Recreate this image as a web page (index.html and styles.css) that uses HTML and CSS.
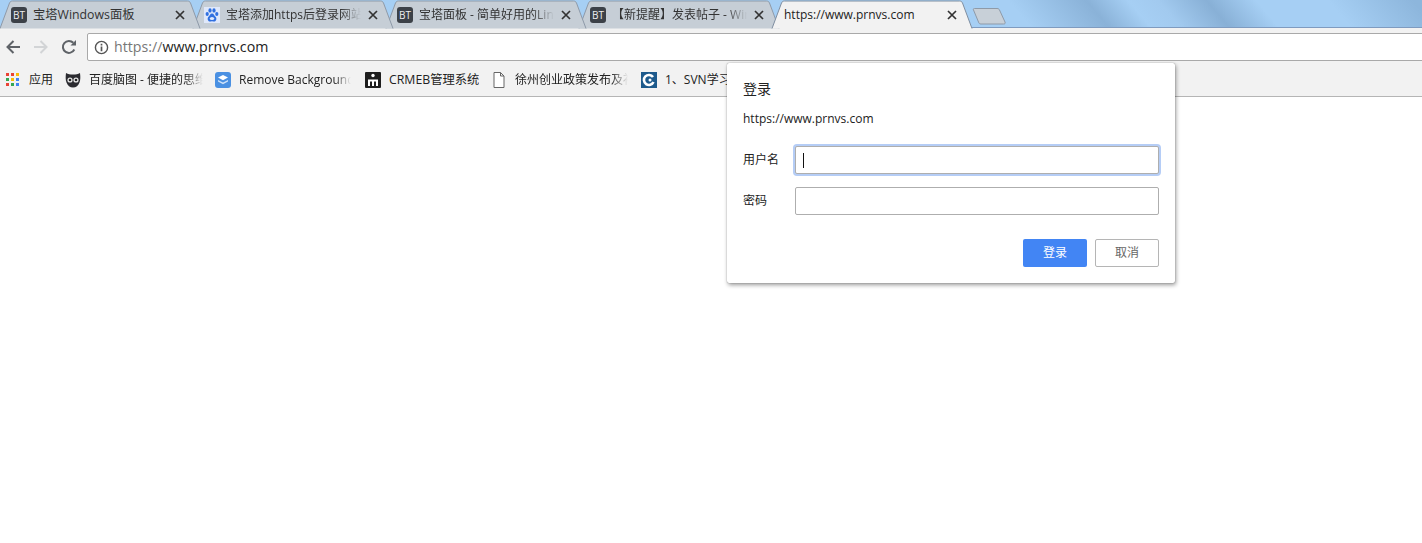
FILE: index.html
```html
<!DOCTYPE html>
<html lang="zh-CN">
<head>
<meta charset="utf-8">
<title>https://www.prnvs.com</title>
<link rel="stylesheet" href="styles.css">
</head>
<body>
<header class="chrome">
  <div class="tabstrip">
    <div class="tab">
      <svg class="tab-shape" viewBox="0 0 205 29"><path d="M1 28.500 L10.500 3 C11 1.800 12 1 13.500 1 H188.500 C190 1 191 1.800 191.500 3 L201 28.500" fill="#c6ced6" stroke="#8e9aa8"/></svg>
      <span class="bt">BT</span><span class="tab-title t1">宝塔Windows面板</span>
      <svg class="x" viewBox="0 0 10 10"><path d="M1 1l8 8M9 1 1 9" fill="none" stroke="#333" stroke-width="1.700"/></svg>
    </div>
    <div class="tab">
      <svg class="tab-shape" viewBox="0 0 205 29"><path d="M1 28.500 L10.500 3 C11 1.800 12 1 13.500 1 H188.500 C190 1 191 1.800 191.500 3 L201 28.500" fill="#c6ced6" stroke="#8e9aa8"/></svg>
      <svg class="fav" viewBox="0 0 16 16"><rect width="16" height="16" fill="#dfe8fb"/><g fill="#2f6fe0"><ellipse cx="3.200" cy="7" rx="1.600" ry="2"/><ellipse cx="6" cy="3.400" rx="1.600" ry="2.200"/><ellipse cx="10" cy="3.400" rx="1.600" ry="2.200"/><ellipse cx="12.800" cy="7" rx="1.600" ry="2"/><path d="M8 6.500c-2 0-2 2-3.500 3.200C3 11 3.500 14.500 6 14.500c1 0 1.300-.3 2-.3s1 .3 2 .3c2.500 0 3-3.500 1.500-4.800C10 8.500 10 6.500 8 6.500z"/></g><ellipse cx="8" cy="11.500" rx="2.200" ry="1.600" fill="#dfe8fb"/></svg>
      <span class="tab-title">宝塔添加https后登录网站</span>
      <svg class="x" viewBox="0 0 10 10"><path d="M1 1l8 8M9 1 1 9" fill="none" stroke="#333" stroke-width="1.700"/></svg>
    </div>
    <div class="tab">
      <svg class="tab-shape" viewBox="0 0 205 29"><path d="M1 28.500 L10.500 3 C11 1.800 12 1 13.500 1 H188.500 C190 1 191 1.800 191.500 3 L201 28.500" fill="#c6ced6" stroke="#8e9aa8"/></svg>
      <span class="bt">BT</span><span class="tab-title">宝塔面板 - 简单好用的Linux</span>
      <svg class="x" viewBox="0 0 10 10"><path d="M1 1l8 8M9 1 1 9" fill="none" stroke="#333" stroke-width="1.700"/></svg>
    </div>
    <div class="tab">
      <svg class="tab-shape" viewBox="0 0 205 29"><path d="M1 28.500 L10.500 3 C11 1.800 12 1 13.500 1 H188.500 C190 1 191 1.800 191.500 3 L201 28.500" fill="#c6ced6" stroke="#8e9aa8"/></svg>
      <span class="bt">BT</span><span class="tab-title">【新提醒】发表帖子 - Windows</span>
      <svg class="x" viewBox="0 0 10 10"><path d="M1 1l8 8M9 1 1 9" fill="none" stroke="#333" stroke-width="1.700"/></svg>
    </div>
    <div class="tab tab-active">
      <svg class="tab-shape" viewBox="0 0 205 29"><path d="M1 28.500 L10.500 3 C11 1.800 12 1 13.500 1 H188.500 C190 1 191 1.800 191.500 3 L201 28.500" fill="#f2f2f2" stroke="#7f8ea0"/></svg>
      <span class="tab-title active-title">https://www.prnvs.com</span>
      <svg class="x" viewBox="0 0 10 10"><path d="M1 1l8 8M9 1 1 9" fill="none" stroke="#333" stroke-width="1.700"/></svg>
    </div>
    <svg class="newtab" viewBox="0 0 36 18"><path d="M2.500 1.500 H25 C26.500 1.500 27 2 27.500 3 L33 15 C33.500 16.500 33 17 31.500 17 H9 C7.500 17 7 16.500 6.500 15 L1.500 3 C1 2 1.500 1.500 2.500 1.500z" fill="#c8d0d8" stroke="#8e9aa8"/></svg>
  </div>

  <div class="toolbar">
    <svg class="nav" viewBox="0 0 16 16"><path d="M15 8H2.500M8.500 2 2.500 8l6 6" fill="none" stroke="#5f6368" stroke-width="2"/></svg>
    <svg class="nav" viewBox="0 0 16 16"><path d="M1 8h12.500M7.500 2l6 6-6 6" fill="none" stroke="#d2d4d6" stroke-width="2"/></svg>
    <svg class="nav" viewBox="0 0 16 16"><path d="M13.300 10.500A6 6 0 1 1 12.300 3.800" fill="none" stroke="#5f6368" stroke-width="2"/><path d="M9.500 6.500H15V1z" fill="#5f6368"/></svg>
    <div class="omnibox">
      <svg class="info" viewBox="0 0 16 16"><circle cx="8" cy="8" r="6.500" fill="none" stroke="#555" stroke-width="1.500"/><path d="M7.100 7h1.800v5H7.100zM7.100 4h1.800v1.800H7.100z" fill="#555"/></svg>
      <span class="url"><span class="scheme">https://</span>www.prnvs.com</span>
    </div>
  </div>

  <nav class="bookmarks">
    <div class="bm bm-apps">
      <svg class="bm-icon apps" viewBox="0 0 14 14"><g><rect x="0" y="0" width="3" height="3" fill="#ea4335"/><rect x="5" y="0" width="3" height="3" fill="#ea4335"/><rect x="10" y="0" width="3" height="3" fill="#fbbc05"/><rect x="0" y="5" width="3" height="3" fill="#34a853"/><rect x="5" y="5" width="3" height="3" fill="#fbbc05"/><rect x="10" y="5" width="3" height="3" fill="#4285f4"/><rect x="0" y="10" width="3" height="3" fill="#ea4335"/><rect x="5" y="10" width="3" height="3" fill="#34a853"/><rect x="10" y="10" width="3" height="3" fill="#4285f4"/></g></svg>
      <span class="bm-text">应用</span>
    </div>
    <div class="bm bm-owl">
      <svg class="bm-icon" viewBox="0 0 16 16"><path d="M1 1c2 1 4 1.500 7 1.500S13 2 15 1c.5 4 .5 7-.5 9.500C13.500 13.500 11 15.500 8 15.500S2.500 13.500 1.500 10.500C.5 8 .5 5 1 1z" fill="#2b2b30"/><circle cx="5" cy="8" r="2.600" fill="#e8e8e8"/><circle cx="11" cy="8" r="2.600" fill="#e8e8e8"/><circle cx="5" cy="8" r="1.300" fill="#222"/><circle cx="11" cy="8" r="1.300" fill="#222"/></svg>
      <span class="bm-text fade">百度脑图 - 便捷的思维工具</span>
    </div>
    <div class="bm bm-rb">
      <svg class="bm-icon" viewBox="0 0 16 16"><rect width="16" height="16" rx="3" fill="#4a90e2"/><path d="M8 3l5 2.600L8 8.200 3 5.600z" fill="#fff"/><path d="M3 8l5 2.600L13 8v1.600l-5 2.600-5-2.600z" fill="#cfe2f8"/></svg>
      <span class="bm-text fade">Remove Background</span>
    </div>
    <div class="bm bm-crmeb">
      <svg class="bm-icon" viewBox="0 0 16 16"><rect width="16" height="16" rx="1" fill="#1e1e1e"/><circle cx="8" cy="3.500" r="1.700" fill="#fff"/><path d="M3 14V7.500h10V14h-2V9.500H9V14H7V9.500H5V14z" fill="#fff"/></svg>
      <span class="bm-text crmeb-text">CRMEB管理系统</span>
    </div>
    <div class="bm bm-doc">
      <svg class="bm-icon doc" viewBox="0 0 12 16"><path d="M1 .5h6.500L11 4v11.500H1zM7.500.5V4H11" fill="#fff" stroke="#666"/></svg>
      <span class="bm-text fade">徐州创业政策发布及补贴</span>
    </div>
    <div class="bm bm-svn">
      <svg class="bm-icon" viewBox="0 0 16 16"><rect width="16" height="16" fill="#1d5a8c"/><path d="M12 5A5 5 0 1 0 12.500 10" fill="none" stroke="#fff" stroke-width="2.600"/><circle cx="9" cy="8" r="1.500" fill="#fff"/></svg>
      <span class="bm-text">1、SVN学习</span>
    </div>
  </nav>
</header>

<section class="dialog">
  <h1 class="dialog-title">登录</h1>
  <p class="dialog-origin">https://www.prnvs.com</p>
  <div class="field">
    <label class="field-label">用户名</label>
    <div class="input input-focus"><span class="caret"></span></div>
  </div>
  <div class="field">
    <label class="field-label">密码</label>
    <div class="input"></div>
  </div>
  <div class="actions">
    <span class="btn btn-primary">登录</span>
    <span class="btn btn-cancel">取消</span>
  </div>
</section>
</body>
</html>
```

FILE: styles.css
```css
* { box-sizing: border-box; }
html, body { margin: 0; padding: 0; height: 100%; background: #fff; overflow: hidden; }
body { font-family: "Open Sans", "Noto Sans CJK SC", sans-serif; color: #222; }

.chrome { display: flex; flex-direction: column; }

.tabstrip {
  height: 28px;
  display: flex;
  align-items: flex-start;
  position: relative;
  z-index: 1;
  background: linear-gradient(50deg,
    #a6cff4 0, #a6cff4 790px,
    #8ab2d8 850px, #a6cff4 882px,
    #a2caef 905px, #88b0d6 942px, #a6cff4 980px,
    #a6cff4 1035px, #8db6dc 1100px);
  box-shadow: inset 0 -1px 0 #7f9bbf;
}
.tab {
  flex: none;
  width: 205px;
  height: 29px;
  margin-right: -12px;
  position: relative;
  display: flex;
  align-items: center;
  padding: 1px 19px 0 11px;
}
.tab:nth-child(1) { margin-left: -1px; z-index: 4; }
.tab:nth-child(2) { z-index: 3; }
.tab:nth-child(3) { z-index: 2; }
.tab:nth-child(4) { z-index: 1; }
.tab-active { z-index: 5; padding-left: 13px; }
.tab-shape { position: absolute; left: 0; top: 0; width: 100%; height: 100%; }
.tab > :not(.tab-shape) { position: relative; }

.bt {
  flex: none;
  width: 16px;
  height: 16px;
  border-radius: 3px;
  background: #3c4148;
  color: #eee;
  font-size: 10px;
  line-height: 16px;
  text-align: center;
  margin-left: 1px;
}
.fav { flex: none; width: 16px; height: 16px; margin-left: 1px; }
.tab-title {
  flex: 1;
  min-width: 0;
  margin-left: 6px;
  font-size: 12px;
  line-height: 16px;
  white-space: nowrap;
  overflow: hidden;
  color: #333;
  -webkit-mask-image: linear-gradient(90deg, #000 85%, transparent 100%);
  mask-image: linear-gradient(90deg, #000 85%, transparent 100%);
}
.t1 { -webkit-mask-image: none; mask-image: none; font-size: 12.300px; }
.active-title { margin-left: 0; -webkit-mask-image: none; mask-image: none; color: #222; }
.x { flex: none; width: 10px; height: 10px; margin-left: 7px; }
.newtab { flex: none; width: 36px; height: 18px; margin: 7px 0 0 8px; }

.toolbar {
  height: 33px;
  background: #f2f2f2;
  display: flex;
  align-items: flex-start;
  padding-left: 5px;
}
.nav { flex: none; width: 16px; height: 16px; margin: 11px 12px 0 0; }
.nav:nth-child(3) { margin-right: 10px; }
.omnibox {
  flex: 1;
  height: 28px;
  margin-top: 5px;
  margin-right: -4px;
  background: #fff;
  border: 1px solid #a9a9a9;
  border-radius: 2px 0 0 2px;
  display: flex;
  align-items: center;
  padding-left: 6px;
}
.info { flex: none; width: 15px; height: 15px; }
.url { margin-left: 5px; font-size: 14.200px; line-height: 20px; color: #222; }
.scheme { color: #777; }

.bookmarks {
  height: 36px;
  background: #f2f2f2;
  border-bottom: 1px solid #b5b5b5;
  display: flex;
  align-items: center;
  padding-top: 2px;
  font-size: 12px;
  overflow: hidden;
}
.bm { flex: none; display: flex; align-items: center; overflow: hidden; }
.bm-icon { flex: none; width: 16px; height: 16px; }
.apps { width: 14px; height: 14px; }
.doc { width: 12px; }
.bm-text { white-space: nowrap; margin-left: 8px; line-height: 16px; color: #222; overflow: hidden; }
.crmeb-text { font-size: 12.300px; }
.fade {
  -webkit-mask-image: linear-gradient(90deg, #000 85%, transparent 100%);
  mask-image: linear-gradient(90deg, #000 85%, transparent 100%);
}
.bm-apps { margin-left: 6px; width: 47px; }
.bm-apps .bm-text { margin-left: 9px; }
.bm-owl { margin-left: 12px; width: 138px; }
.bm-rb { margin-left: 12px; width: 136px; }
.bm-crmeb { margin-left: 14px; width: 114px; }
.bm-doc { margin-left: 14px; width: 135px; }
.bm-doc .bm-text { margin-left: 10px; }
.bm-svn { margin-left: 13px; width: 100px; }

.dialog {
  position: absolute;
  left: 727px;
  top: 63px;
  width: 448px;
  height: 220px;
  background: #fff;
  border-radius: 2px;
  box-shadow: 0 0 1px rgba(0,0,0,.5), 1px 2px 4px rgba(0,0,0,.4);
  padding: 16px 16px 0;
  z-index: 5;
}
.dialog-title { margin: 0; font-size: 14px; font-weight: 400; line-height: 20px; color: #222; }
.dialog-origin { margin: 10px 0 0; font-size: 12px; line-height: 20px; color: #222; }
.field { display: flex; align-items: center; height: 28px; margin-bottom: 13px; }
.dialog-origin + .field { margin-top: 17px; }
.field-label { flex: none; width: 52px; font-size: 12px; line-height: 16px; color: #222; }
.input {
  flex: none;
  width: 364px;
  height: 28px;
  background: #fff;
  border: 1px solid #aeaeae;
  border-radius: 2px;
  display: flex;
  align-items: center;
  padding-left: 7px;
}
.input-focus { box-shadow: 0 0 0 2px #b5cdf6; }
.caret { width: 1px; height: 15px; background: #111; }
.actions { display: flex; justify-content: flex-end; gap: 8px; margin-top: 24px; }
.btn {
  width: 64px;
  height: 28px;
  border-radius: 2px;
  font-size: 12px;
  line-height: 28px;
  text-align: center;
}
.btn-primary { background: #4285f4; color: #fff; }
.btn-cancel { border: 1px solid #b5b5b5; color: #666; line-height: 26px; }
```
